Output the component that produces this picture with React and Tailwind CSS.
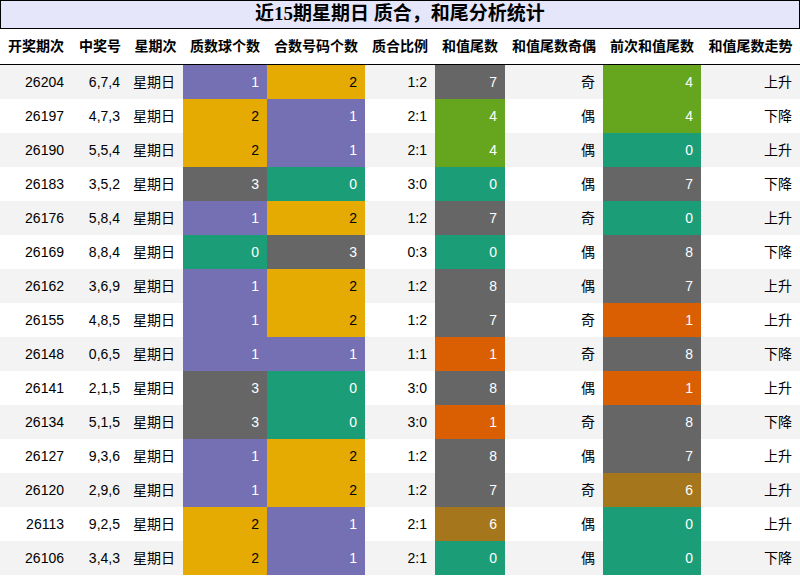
const TEAL = "bg-[#1b9e77] text-white";
const ORANGE = "bg-[#d95f02] text-white";
const PURPLE = "bg-[#7570b3] text-white";
const GREEN = "bg-[#66a61e] text-white";
const YELLOW = "bg-[#e6ab02] text-black";
const BROWN = "bg-[#a6761d] text-white";
const GREY = "bg-[#666666] text-white";

const countColor = { 0: TEAL, 1: PURPLE, 2: YELLOW, 3: GREY };
const tailColor = { 0: TEAL, 1: ORANGE, 2: PURPLE, 4: GREEN, 5: YELLOW, 6: BROWN, 7: GREY, 8: GREY, 9: GREY };

const headers = [
  "开奖期次",
  "中奖号",
  "星期次",
  "质数球个数",
  "合数号码个数",
  "质合比例",
  "和值尾数",
  "和值尾数奇偶",
  "前次和值尾数",
  "和值尾数走势",
];

// issue, numbers, primes, composites, tail, parity, prevTail, trend
const rows = [
  ["26204", "6,7,4", 1, 2, 7, "奇", 4, "上升"],
  ["26197", "4,7,3", 2, 1, 4, "偶", 4, "下降"],
  ["26190", "5,5,4", 2, 1, 4, "偶", 0, "上升"],
  ["26183", "3,5,2", 3, 0, 0, "偶", 7, "下降"],
  ["26176", "5,8,4", 1, 2, 7, "奇", 0, "上升"],
  ["26169", "8,8,4", 0, 3, 0, "偶", 8, "下降"],
  ["26162", "3,6,9", 1, 2, 8, "偶", 7, "上升"],
  ["26155", "4,8,5", 1, 2, 7, "奇", 1, "上升"],
  ["26148", "0,6,5", 1, 1, 1, "奇", 8, "下降"],
  ["26141", "2,1,5", 3, 0, 8, "偶", 1, "上升"],
  ["26134", "5,1,5", 3, 0, 1, "奇", 8, "下降"],
  ["26127", "9,3,6", 1, 2, 8, "偶", 7, "上升"],
  ["26120", "2,9,6", 1, 2, 7, "奇", 6, "上升"],
  ["26113", "9,2,5", 2, 1, 6, "偶", 0, "上升"],
  ["26106", "3,4,3", 2, 1, 0, "偶", 0, "下降"],
];

const cols = "grid grid-cols-[72px_56px_55px_84px_98px_70px_70px_98px_98px_99px]";

function Cell({ children, className = "" }) {
  return <div className={`flex items-center justify-end pr-2 ${className}`}>{children}</div>;
}

export default function App() {
  return (
    <div className="w-[800px] h-[576px] overflow-hidden bg-white text-black font-['Liberation_Sans','Noto_Sans_CJK_SC',sans-serif]">
      <div className="h-[29px] border border-black bg-[#e6e6fa] flex items-center justify-center text-[19px] font-bold font-['Liberation_Serif','Noto_Sans_CJK_SC',serif]">
        近15期星期日 质合，和尾分析统计
      </div>

      <div className={`${cols} h-[36px] border-b border-black text-[14px] font-bold`}>
        {headers.map((h) => (
          <div key={h} className="flex items-center justify-center whitespace-nowrap">{h}</div>
        ))}
      </div>

      {rows.map(([issue, nums, primes, comps, tail, parity, prev, trend], i) => (
        <div key={issue} className={`${cols} h-[34px] text-[14px] ${i % 2 === 0 ? "bg-[#f3f3f3]" : "bg-white"}`}>
          <Cell>{issue}</Cell>
          <Cell>{nums}</Cell>
          <Cell>星期日</Cell>
          <Cell className={countColor[primes]}>{primes}</Cell>
          <Cell className={countColor[comps]}>{comps}</Cell>
          <Cell>{primes}:{comps}</Cell>
          <Cell className={tailColor[tail]}>{tail}</Cell>
          <Cell>{parity}</Cell>
          <Cell className={tailColor[prev]}>{prev}</Cell>
          <Cell>{trend}</Cell>
        </div>
      ))}
    </div>
  );
}
